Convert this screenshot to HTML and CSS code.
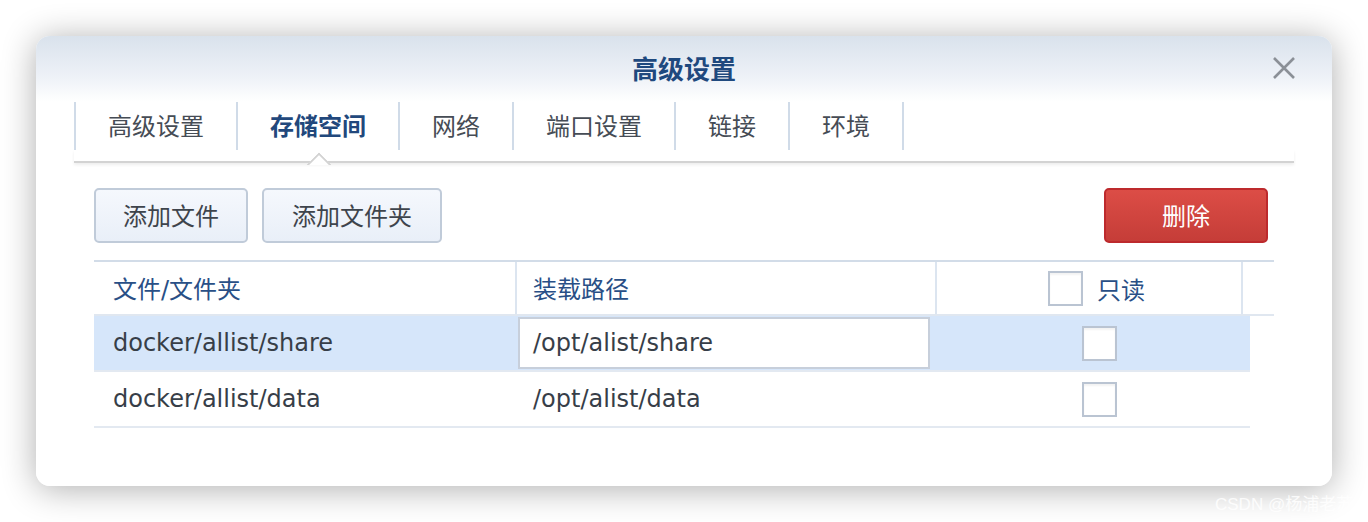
FILE: index.html
```html
<!DOCTYPE html>
<html lang="zh-CN">
<head>
<meta charset="utf-8">
<title>高级设置</title>
<link rel="stylesheet" href="styles.css">
</head>
<body>
<div class="dialog">
  <div class="header">
    <div class="title">高级设置</div>
    <button class="close" aria-label="关闭">
      <svg width="24" height="24" viewBox="0 0 24 24"><path d="M2 2 L22 22 M22 2 L2 22" stroke="#8b9097" stroke-width="2.6" fill="none"/></svg>
    </button>
  </div>
  <div class="tabs">
    <div class="tab">高级设置</div>
    <div class="tab active">存储空间</div>
    <div class="tab">网络</div>
    <div class="tab">端口设置</div>
    <div class="tab">链接</div>
    <div class="tab last">环境</div>
  </div>
  <div class="tabline"></div>
  <div class="content">
    <div class="toolbar">
      <button class="btn">添加文件</button>
      <button class="btn">添加文件夹</button>
      <button class="btn danger">删除</button>
    </div>
    <div class="table">
      <div class="thead">
        <div class="th">文件/文件夹</div>
        <div class="th sep">装载路径</div>
        <div class="th sep center"><span class="cb"></span><span class="cblabel">只读</span></div>
        <div class="th sep"></div>
      </div>
      <div class="row selected">
        <div class="td">docker/allist/share</div>
        <div class="td edit"><div class="input">/opt/alist/share</div></div>
        <div class="td center"><span class="cb"></span></div>
      </div>
      <div class="row">
        <div class="td">docker/allist/data</div>
        <div class="td path">/opt/alist/data</div>
        <div class="td center"><span class="cb"></span></div>
      </div>
    </div>
  </div>
</div>
<div class="watermark">CSDN @杨浦老苏</div>
</body>
</html>
```
FILE: styles.css
```css
html, body {
  margin: 0;
  padding: 0;
  background: #ffffff;
}
body {
  width: 1368px;
  height: 522px;
  overflow: hidden;
  position: relative;
  font-family: "DejaVu Sans", "Noto Sans CJK SC", sans-serif;
}
.dialog {
  margin: 36px 0 0 36px;
  width: 1296px;
  height: 450px;
  box-sizing: border-box;
  border-radius: 14px;
  background: linear-gradient(#d9e2ec 0, #edf1f7 40px, #fbfcfd 60px, #ffffff 66px);
  box-shadow: 0 3px 34px rgba(0, 0, 0, 0.32);
}
.header {
  height: 66px;
  display: grid;
  grid-template-columns: 1fr auto 1fr;
  align-items: center;
}
.title {
  grid-column: 2;
  font-family: "Noto Sans CJK SC", sans-serif;
  font-size: 26px;
  font-weight: 700;
  color: #1f497e;
  line-height: 1;
  margin-top: -3px;
}
.close {
  grid-column: 3;
  justify-self: end;
  margin-right: 36px;
  width: 24px;
  height: 24px;
  padding: 0;
  border: 0;
  background: transparent;
  display: flex;
  margin-top: -2px;
}
.tabs {
  margin: 0 38px;
  height: 48px;
  display: flex;
}
.tab {
  position: relative;
  height: 48px;
  box-sizing: border-box;
  display: flex;
  align-items: center;
  padding: 0 32px 3px 32px;
  border-left: 2px solid #d0dbe8;
  font-family: "Noto Sans CJK SC", sans-serif;
  font-size: 24px;
  color: #464c55;
}
.tab.last {
  border-right: 2px solid #d0dbe8;
}
.tab.active {
  font-weight: 700;
  color: #22487c;
}
.tab.active::after {
  content: "";
  position: absolute;
  left: 50%;
  top: 54px;
  width: 16px;
  height: 16px;
  margin-left: -8px;
  background: #ffffff;
  border-top: 2px solid #d3d3d3;
  border-left: 2px solid #d3d3d3;
  transform: rotate(45deg);
  clip-path: polygon(0 0, 100% 0, 0 100%);
  z-index: 2;
}
.tabline {
  margin: 0 38px;
  height: 11px;
  border-bottom: 2px solid #d3d3d3;
  box-shadow: 0 2px 3px rgba(0, 0, 0, 0.07);
}
.content {
  padding: 25px 58px 0 58px;
}
.toolbar {
  display: flex;
  gap: 14px;
}
.btn {
  height: 55px;
  box-sizing: border-box;
  padding: 0 28px 2px 28px;
  border: 2px solid #c0cbd9;
  border-radius: 5px;
  background: linear-gradient(#f5f8fd, #e9eff8);
  font-family: "Noto Sans CJK SC", sans-serif;
  font-size: 24px;
  color: #3e444c;
  line-height: 1;
}
.btn:first-child {
  padding: 0 27px 2px 27px;
}
.btn.danger {
  margin-left: auto;
  margin-right: 6px;
  width: 164px;
  border-color: #bd2a2d;
  background: linear-gradient(#dc4d46, #c53d38);
  color: #ffffff;
}
.table {
  margin-top: 17px;
}
.thead {
  display: grid;
  grid-template-columns: 421px 420px 306px 33px;
  border-top: 2px solid #d2dce8;
  border-bottom: 2px solid #e0e7f0;
  height: 56px;
  box-sizing: border-box;
}
.th {
  display: flex;
  align-items: center;
  padding-left: 19px;
  padding-bottom: 2px;
  font-size: 24px;
  color: #294f86;
}
.th.sep {
  border-left: 2px solid #dce5f0;
  padding-left: 16px;
}
.center {
  justify-content: center;
}
.th.center {
  padding-left: 15px;
  padding-bottom: 0;
}
.cb {
  display: inline-block;
  width: 35px;
  height: 35px;
  box-sizing: border-box;
  border: 2px solid #bac4d2;
  background: #ffffff;
  box-shadow: inset 0 2px 2px rgba(0, 0, 0, 0.05);
}
.cblabel {
  margin-left: 14px;
  font-family: "Noto Sans CJK SC", sans-serif;
}
.row {
  display: grid;
  grid-template-columns: 421px 420px 315px;
  width: 1156px;
  height: 56px;
  box-sizing: border-box;
  border-bottom: 2px solid #e3e9f1;
}
.row.selected {
  background: #d6e6fa;
}
.td {
  display: flex;
  align-items: center;
  padding-left: 19px;
  font-size: 24px;
  color: #373e48;
}
.td.path {
  padding-left: 18px;
}
.td.edit {
  padding-left: 3px;
  padding-right: 5px;
}
.input {
  width: 412px;
  height: 52px;
  box-sizing: border-box;
  border: 2px solid #c7cfdb;
  background: #ffffff;
  display: flex;
  align-items: center;
  padding-left: 13px;
}
.td.center {
  padding-left: 14px;
}
.watermark {
  position: absolute;
  left: 1215px;
  top: 490px;
  font-family: "Liberation Sans", "Noto Sans CJK SC", sans-serif;
  font-size: 17px;
  color: rgba(255, 255, 255, 0.85);
  white-space: nowrap;
}
```
